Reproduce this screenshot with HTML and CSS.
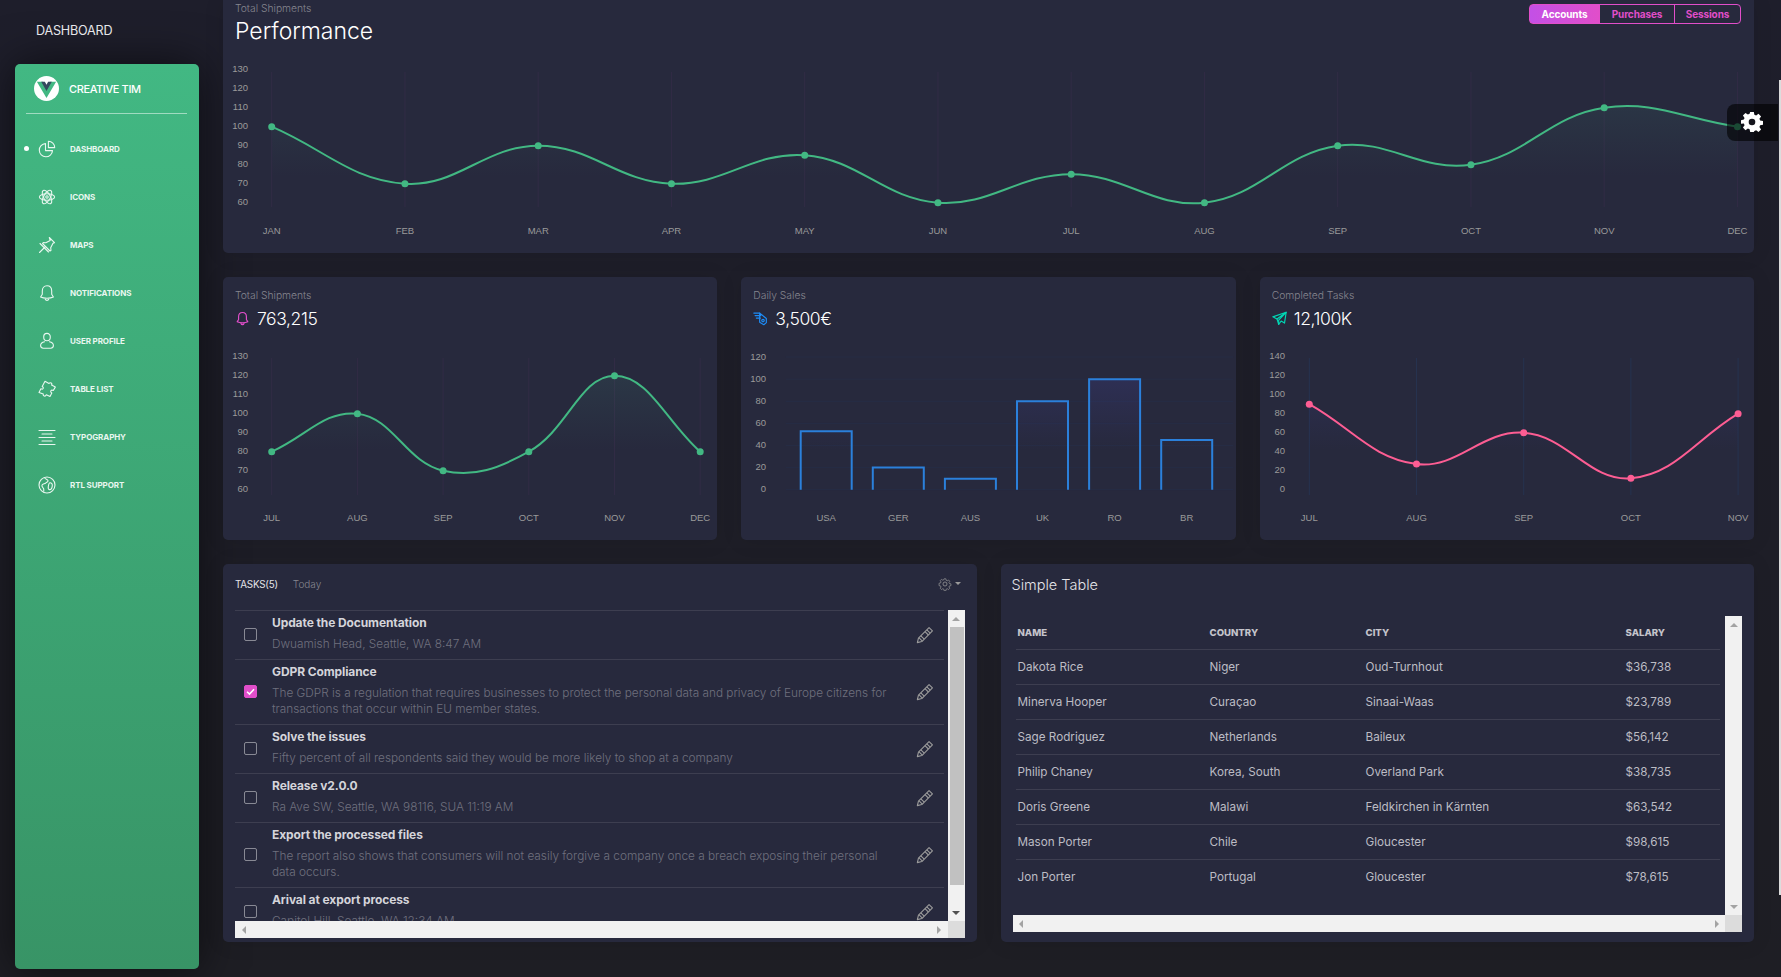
FILE: index.html
```html
<!DOCTYPE html>
<html lang="en">
<head>
    <meta charset="UTF-8">
    <meta name="viewport" content="width=device-width, initial-scale=1.0">
    <title>Vue Black Dashboard</title>
    <link rel="stylesheet" href="styles.css">
</head>
<body>
    <!-- Shared icons -->
    <svg class="sprite" aria-hidden="true">
        <symbol id="i-pencil" viewBox="0 0 16 16">
            <path d="M11.6 1.400l3 3-9.400 9.400-4 1 1-4z"/>
            <path d="M9.600 3.400l3 3M2.600 10.400l3 3M4.300 8.700l3 3M8 5l3 3"/>
        </symbol>
        <symbol id="i-bell" viewBox="0 0 18 18">
            <path d="M9 1.800c-3 0-4.700 2.300-4.700 5.200v3.200L2.600 13c1.800.9 3.900 1.200 6.400 1.200s4.600-.3 6.400-1.200l-1.700-2.800V7c0-2.900-1.700-5.200-4.700-5.200z"/>
            <path d="M7.200 15c.3 1 1 1.400 1.800 1.400s1.500-.4 1.800-1.400"/>
        </symbol>
    </svg>

    <div class="app">
        <aside class="side-col">
            <div class="nav-title">DASHBOARD</div>
            <div class="sidebar">
                <div class="brand">
                    <span class="brand-logo">
                        <svg viewBox="0 0 26 26">
                            <path class="v-outer" d="M3 6h6.500L13 12l3.500-6H23L13 23z"/>
                            <path class="v-inner" d="M7.500 6h3.800L13 9l1.700-3h3.800L13 15.500z"/>
                        </svg>
                    </span>
                    <span class="brand-name">CREATIVE TIM</span>
                </div>
                <ul class="menu">
                    <li class="menu-item active">
                        <svg class="menu-icon" viewBox="0 0 18 18"><path d="M7.500 3.600a6.600 6.600 0 1 0 7 7H7.500z"/><path d="M10.400 1.300a6.300 6.300 0 0 1 6.300 6.300h-6.300z"/></svg>
                        <span>DASHBOARD</span>
                    </li>
                    <li class="menu-item">
                        <svg class="menu-icon" viewBox="0 0 18 18"><ellipse cx="9" cy="9" rx="7.600" ry="3.300"/><ellipse cx="9" cy="9" rx="7.600" ry="3.300" transform="rotate(60 9 9)"/><ellipse cx="9" cy="9" rx="7.600" ry="3.300" transform="rotate(120 9 9)"/><circle cx="9" cy="9" r="1.200"/></svg>
                        <span>ICONS</span>
                    </li>
                    <li class="menu-item">
                        <svg class="menu-icon" viewBox="0 0 18 18"><path d="M11.300 1.500l5.200 5.200-1.500.6-2.300 4.400.3 2.500-1 .8L4.500 7.500l.8-1 2.500.3 4.400-2.300z"/><path d="M7.500 10.500l-6 6"/><path d="M2 7.500l8.500 8.500"/></svg>
                        <span>MAPS</span>
                    </li>
                    <li class="menu-item">
                        <svg class="menu-icon"><use href="#i-bell"/></svg>
                        <span>NOTIFICATIONS</span>
                    </li>
                    <li class="menu-item">
                        <svg class="menu-icon" viewBox="0 0 18 18"><path d="M9 1.400c-2 0-3.300 1.500-3.300 3.600S7 8.800 9 8.800s3.300-1.700 3.300-3.800S11 1.400 9 1.400z"/><path d="M6.600 9.800c-2.500.5-4 1.800-4 3.800 0 1.700 1 2.600 2.700 2.600h7.400c1.700 0 2.700-.9 2.700-2.600 0-2-1.500-3.300-4-3.800"/></svg>
                        <span>USER PROFILE</span>
                    </li>
                    <li class="menu-item">
                        <svg class="menu-icon" viewBox="0 0 18 18"><path d="M7 1.300l4 2.200c.6-.8 1.500-.9 2.200-.5.700.5.800 1.300.4 2.100l3.700 2-2 3.400c-1-.5-2-.4-2.400.3-.4.700 0 1.600.9 2.200l-1.800 3.500-3.700-1.700c-.4 1-1.200 1.500-2.100 1.200-.8-.3-1.200-1.100-.9-2L1 12.500l1.900-3.700c.9.500 1.800.4 2.200-.3.400-.8 0-1.600-.9-2.100z"/></svg>
                        <span>TABLE LIST</span>
                    </li>
                    <li class="menu-item">
                        <svg class="menu-icon" viewBox="0 0 18 18"><path d="M1 2.500h16M4 6h10M1 9.500h16M4 13h10M1 16.500h16"/></svg>
                        <span>TYPOGRAPHY</span>
                    </li>
                    <li class="menu-item">
                        <svg class="menu-icon" viewBox="0 0 18 18"><circle cx="9" cy="9" r="8"/><path d="M6.500 1.800c1 1.500 2.800 1.500 3.500 2.800.5 1.200-1.500 1.800-2.500 2.600-1 .8-3 .5-3.500 2-.4 1.400 1 2.400 1.600 3.500.4.900 0 1.800.2 2.600"/><path d="M12 6.800c1.500 0 2.600 1 2.300 3-.3 2.200-1.500 4-3 3.800-1.300-.2-1.200-1.600-1-3 .3-2 .5-3.800 1.700-3.800z"/></svg>
                        <span>RTL SUPPORT</span>
                    </li>
                </ul>
            </div>
        </aside>

        <main class="content">
            <!-- Performance -->
            <section class="card card-wide">
                <div class="wide-head">
                    <div>
                        <div class="category">Total Shipments</div>
                        <h2 class="wide-title">Performance</h2>
                    </div>
                    <div class="tabs">
                        <button class="tab tab-on">Accounts</button>
                        <button class="tab">Purchases</button>
                        <button class="tab">Sessions</button>
                    </div>
                </div>
                <svg id="chart-performance" class="chart chart-wide"></svg>
            </section>

            <!-- Small charts -->
            <div class="row-three">
                <section class="card card-small">
                    <div class="small-head">
                        <div class="category">Total Shipments</div>
                        <div class="stat">
                            <svg class="stat-icon stat-pink"><use href="#i-bell"/></svg>
                            <span>763,215</span>
                        </div>
                    </div>
                    <svg id="chart-shipments" class="chart chart-small"></svg>
                </section>
                <section class="card card-small">
                    <div class="small-head">
                        <div class="category">Daily Sales</div>
                        <div class="stat">
                            <svg class="stat-icon stat-blue" viewBox="0 0 18 18"><path d="M1 2.500h7M2.500 5.500h7M4 8.500h5"/><path d="M8 2.500l8 6.500v5l-3 2.500-5-3V2.500z"/><circle cx="12" cy="11.500" r="1.500"/></svg>
                            <span>3,500€</span>
                        </div>
                    </div>
                    <svg id="chart-sales" class="chart chart-small"></svg>
                </section>
                <section class="card card-small">
                    <div class="small-head">
                        <div class="category">Completed Tasks</div>
                        <div class="stat">
                            <svg class="stat-icon stat-teal" viewBox="0 0 18 18"><path d="M17 1.500L1 7l5 2.500L8 16l3-4 4 2.500z"/><path d="M17 1.500L6 9.500M17 1.500L8 11v5"/></svg>
                            <span>12,100K</span>
                        </div>
                    </div>
                    <svg id="chart-tasks" class="chart chart-small"></svg>
                </section>
            </div>

            <div class="row-two">
                <!-- Tasks -->
                <section class="card card-tall">
                    <div class="tasks-head">
                        <span class="tasks-title">TASKS(5)</span>
                        <span class="tasks-today">Today</span>
                        <span class="tasks-menu">
                            <svg class="tasks-gear" viewBox="0 0 18 18"><circle cx="9" cy="9" r="2.600"/><path d="M7.700 1.500h2.600l.4 2.200 1.500.7 1.900-1.200 1.800 1.800-1.200 1.900.7 1.500 2.200.4v2.600l-2.200.4-.7 1.500 1.200 1.900-1.800 1.800-1.900-1.200-1.500.7-.4 2.200H7.700l-.4-2.200-1.500-.7-1.900 1.200-1.800-1.800 1.200-1.900-.7-1.500-2.200-.4V7.900l2.200-.4.700-1.500-1.200-1.900 1.800-1.800 1.900 1.200 1.500-.7z" transform="translate(1 1) scale(.89)"/></svg>
                            <i class="caret"></i>
                        </span>
                    </div>
                    <div class="scroll-box tasks-box">
                        <div class="scroll-body">
                            <div class="task">
                                <span class="check"></span>
                                <div class="task-text">
                                    <div class="task-title">Update the Documentation</div>
                                    <div class="task-desc">Dwuamish Head, Seattle, WA 8:47 AM</div>
                                </div>
                                <svg class="pencil"><use href="#i-pencil"/></svg>
                            </div>
                            <div class="task">
                                <span class="check check-on">
                                    <svg viewBox="0 0 13 13"><path d="M3 6.800l2.500 2.300L10 4.200"/></svg>
                                </span>
                                <div class="task-text">
                                    <div class="task-title">GDPR Compliance</div>
                                    <div class="task-desc">The GDPR is a regulation that requires businesses to protect the personal data and privacy of Europe citizens for<br>transactions that occur within EU member states.</div>
                                </div>
                                <svg class="pencil"><use href="#i-pencil"/></svg>
                            </div>
                            <div class="task">
                                <span class="check"></span>
                                <div class="task-text">
                                    <div class="task-title">Solve the issues</div>
                                    <div class="task-desc">Fifty percent of all respondents said they would be more likely to shop at a company</div>
                                </div>
                                <svg class="pencil"><use href="#i-pencil"/></svg>
                            </div>
                            <div class="task">
                                <span class="check"></span>
                                <div class="task-text">
                                    <div class="task-title">Release v2.0.0</div>
                                    <div class="task-desc">Ra Ave SW, Seattle, WA 98116, SUA 11:19 AM</div>
                                </div>
                                <svg class="pencil"><use href="#i-pencil"/></svg>
                            </div>
                            <div class="task">
                                <span class="check"></span>
                                <div class="task-text">
                                    <div class="task-title">Export the processed files</div>
                                    <div class="task-desc">The report also shows that consumers will not easily forgive a company once a breach exposing their personal<br>data occurs.</div>
                                </div>
                                <svg class="pencil"><use href="#i-pencil"/></svg>
                            </div>
                            <div class="task">
                                <span class="check"></span>
                                <div class="task-text">
                                    <div class="task-title">Arival at export process</div>
                                    <div class="task-desc">Capitol Hill, Seattle, WA 12:34 AM</div>
                                </div>
                                <svg class="pencil"><use href="#i-pencil"/></svg>
                            </div>
                        </div>
                        <div class="bar-v">
                            <i class="arrow arrow-up"></i>
                            <div class="thumb"></div>
                            <i class="arrow arrow-down arrow-dark"></i>
                        </div>
                        <div class="bar-h">
                            <i class="arrow arrow-left"></i>
                            <i class="arrow arrow-right"></i>
                            <div class="corner"></div>
                        </div>
                    </div>
                </section>

                <!-- Simple table -->
                <section class="card card-tall">
                    <h4 class="table-title">Simple Table</h4>
                    <div class="scroll-box table-box">
                        <div class="scroll-body">
                            <table class="people">
                                <thead>
                                    <tr><th>Name</th><th>Country</th><th>City</th><th>Salary</th></tr>
                                </thead>
                                <tbody>
                                    <tr><td>Dakota Rice</td><td>Niger</td><td>Oud-Turnhout</td><td>$36,738</td></tr>
                                    <tr><td>Minerva Hooper</td><td>Curaçao</td><td>Sinaai-Waas</td><td>$23,789</td></tr>
                                    <tr><td>Sage Rodriguez</td><td>Netherlands</td><td>Baileux</td><td>$56,142</td></tr>
                                    <tr><td>Philip Chaney</td><td>Korea, South</td><td>Overland Park</td><td>$38,735</td></tr>
                                    <tr><td>Doris Greene</td><td>Malawi</td><td>Feldkirchen in Kärnten</td><td>$63,542</td></tr>
                                    <tr><td>Mason Porter</td><td>Chile</td><td>Gloucester</td><td>$98,615</td></tr>
                                    <tr><td>Jon Porter</td><td>Portugal</td><td>Gloucester</td><td>$78,615</td></tr>
                                </tbody>
                            </table>
                        </div>
                        <div class="bar-v">
                            <i class="arrow arrow-up"></i>
                            <i class="arrow arrow-down"></i>
                        </div>
                        <div class="bar-h">
                            <i class="arrow arrow-left"></i>
                            <i class="arrow arrow-right"></i>
                            <div class="corner"></div>
                        </div>
                    </div>
                </section>
            </div>
        </main>
    </div>

    <!-- Settings tab -->
    <div class="fixed-plugin">
        <svg viewBox="0 0 24 24">
            <path d="M10 1h4l.6 3.100 1.900.8 2.600-1.800 2.800 2.800-1.800 2.600.8 1.900 3.100.6v4l-3.100.6-.8 1.900 1.800 2.600-2.800 2.800-2.600-1.800-1.900.8L14 23h-4l-.6-3.100-1.900-.8-2.600 1.800-2.800-2.800 1.800-2.600-.8-1.900L0 14v-4l3.100-.6.800-1.900-1.800-2.600 2.800-2.800 2.600 1.800 1.900-.8z"/>
            <circle cx="12" cy="12" r="3.600" class="gear-hole"/>
        </svg>
    </div>
    <div class="page-thumb"></div>

    <script src="charts.js"></script>
</body>
</html>
```

FILE: styles.css
```css
* {
    box-sizing: border-box;
}

html, body {
    height: 100%;
}

body {
    font-family: Inter, "Liberation Sans", sans-serif;
    margin: 0;
    overflow: hidden;
    position: relative;
    background: linear-gradient(#1e1e2b, #1e1e24);
    color: white;
}

.sprite {
    display: none;
}

.app {
    display: flex;
    height: 977px;
}

/* Sidebar */
.side-col {
    width: 223px;
    flex: none;
}

.nav-title {
    height: 64px;
    padding: 23px 0 0 36px;
    font-size: 12.6px;
    line-height: 16px;
    letter-spacing: -0.2px;
    color: #e6e6ea;
}

.sidebar {
    width: 184px;
    height: 905px;
    margin-left: 15px;
    border-radius: 5px;
    background: linear-gradient(#42b883, #389466);
    box-shadow: 0 0 45px rgba(0, 0, 0, 0.6);
}

.brand {
    display: flex;
    align-items: center;
    height: 50px;
    margin: 0 12px 0 11px;
    padding-left: 8px;
    border-bottom: 1px solid rgba(255, 255, 255, 0.5);
}

.brand-logo {
    width: 25px;
    height: 25px;
    margin-right: 10px;
    border-radius: 50%;
    background: white;
    display: flex;
}

.brand-logo svg {
    width: 25px;
    height: 25px;
}

.v-outer {
    fill: #42b883;
}

.v-inner {
    fill: #35495e;
}

.brand-name {
    font-size: 11px;
    font-weight: 500;
    letter-spacing: -0.4px;
}

.menu {
    list-style: none;
    margin: 11px 0 0;
    padding: 0;
}

.menu-item {
    position: relative;
    display: flex;
    align-items: center;
    height: 48px;
    padding-left: 23px;
    font-size: 8px;
    font-weight: 700;
    letter-spacing: -0.1px;
    color: #e9f7f0;
}

.menu-item.active::before {
    content: "";
    position: absolute;
    left: 9px;
    top: 21px;
    width: 5px;
    height: 5px;
    border-radius: 50%;
    background: white;
}

.menu-icon {
    width: 18px;
    height: 18px;
    margin-right: 14px;
    flex: none;
    fill: none;
    stroke: #e9f7f0;
    stroke-width: 1.1;
    stroke-linejoin: round;
    stroke-linecap: round;
}

/* Content */
.content {
    width: 1531px;
    flex: none;
}

.card {
    background: #27293d;
    border-radius: 5px;
    box-shadow: 0 1px 20px rgba(0, 0, 0, 0.1);
}

.card-wide {
    height: 253px;
    border-radius: 0 0 5px 5px;
}

.wide-head {
    display: flex;
    justify-content: space-between;
    height: 56px;
    padding: 1px 13px 0 12px;
}

.category {
    font-size: 10.3px;
    font-weight: 300;
    line-height: 14px;
    color: #86868f;
}

.wide-title {
    margin: 0;
    font-size: 23px;
    font-weight: 300;
    line-height: 32px;
    color: white;
}

.tabs {
    display: flex;
    margin-top: 3px;
    height: 20px;
}

.tab {
    height: 20px;
    padding: 0;
    width: 67px;
    border: 1px solid #e14eca;
    margin-left: -1px;
    background: transparent;
    color: #e14eca;
    font-family: inherit;
    font-size: 10px;
    font-weight: 700;
    letter-spacing: -0.1px;
}

.tab:nth-child(1) {
    width: 71px;
    border-radius: 4px 0 0 4px;
}

.tab:nth-child(2) {
    width: 76px;
}

.tab:last-child {
    border-radius: 0 4px 4px 0;
}

.tab-on {
    color: white;
    background: linear-gradient(to right, #c350e6, #e14eca);
}

.chart {
    display: block;
    width: 100%;
}

.chart-wide {
    height: 197px;
}

.chart-small {
    height: 200px;
}

.chart text {
    font-family: "Liberation Sans", sans-serif;
    font-size: 9.5px;
    fill: #9a9a9a;
}

.row-three {
    display: grid;
    grid-template-columns: repeat(3, 1fr);
    gap: 24px;
    margin-top: 24px;
}

.card-small {
    height: 263px;
}

.small-head {
    height: 63px;
    padding: 11px 12px 0;
}

.small-head .category {
    margin-bottom: 1px;
}

.stat {
    display: flex;
    align-items: center;
    gap: 7px;
    height: 30px;
    font-size: 17.5px;
    font-weight: 300;
    letter-spacing: -0.4px;
}

.stat-icon {
    width: 15px;
    height: 15px;
    flex: none;
    fill: none;
    stroke-width: 1.4;
    stroke-linejoin: round;
    stroke-linecap: round;
}

.stat-pink {
    stroke: #e14eca;
}

.stat-blue {
    stroke: #1d8cf8;
}

.stat-teal {
    stroke: #00d6b4;
}

.row-two {
    display: grid;
    grid-template-columns: 1fr 1fr;
    gap: 24px;
    margin-top: 24px;
}

.card-tall {
    height: 378px;
}

/* Tasks */
.tasks-head {
    display: flex;
    align-items: center;
    height: 39px;
    padding: 0 12px;
    margin-bottom: 7px;
}

.tasks-title {
    font-size: 9.8px;
    padding-top: 1px;
    letter-spacing: -0.2px;
    color: #e4e4e8;
}

.tasks-today {
    margin-left: 15px;
    font-size: 10px;
    font-weight: 300;
    color: #86868f;
}

.tasks-menu {
    margin-left: auto;
    display: flex;
    align-items: center;
    gap: 3px;
    margin-right: 4px;
}

.tasks-gear {
    width: 14px;
    height: 14px;
    fill: none;
    stroke: #9a9a9a;
    stroke-width: 1;
}

.caret {
    width: 0;
    height: 0;
    border-left: 3px solid transparent;
    border-right: 3px solid transparent;
    border-top: 3px solid #9a9a9a;
}

.scroll-box {
    position: relative;
    margin: 0 12px;
}

.tasks-box {
    height: 328px;
}

.table-box {
    height: 316px;
}

.scroll-body {
    height: calc(100% - 17px);
    margin-right: 17px;
    overflow: hidden;
}

/* Scrollbars drawn over the two panels */
.bar-v {
    position: absolute;
    top: 0;
    right: 0;
    bottom: 17px;
    width: 17px;
    display: flex;
    flex-direction: column;
    align-items: center;
    justify-content: space-between;
    background: #f1f1f1;
}

.tasks-box .bar-v {
    justify-content: flex-start;
}

.tasks-box .arrow-down {
    margin-top: auto;
}

.thumb {
    width: 14px;
    height: 258px;
    margin-left: 1px;
    background: #c1c1c1;
}

.bar-h {
    position: absolute;
    left: 0;
    right: 0;
    bottom: 0;
    height: 17px;
    display: flex;
    background: #f1f1f1;
}

.bar-h .arrow-right {
    margin-left: auto;
}

.corner {
    width: 17px;
    background: #dcdcdc;
}

.arrow {
    width: 17px;
    height: 17px;
    flex: none;
    display: flex;
    align-items: center;
    justify-content: center;
}

.arrow::after {
    content: "";
    width: 0;
    height: 0;
    border-style: solid;
    border-color: transparent;
}

.arrow-up::after {
    border-width: 0 4px 4px;
    border-bottom-color: #a3a3a3;
}

.arrow-down::after {
    border-width: 4px 4px 0;
    border-top-color: #a3a3a3;
}

.arrow-dark::after {
    border-top-color: #505050;
}

.arrow-left::after {
    border-width: 4px 4px 4px 0;
    border-right-color: #a3a3a3;
}

.arrow-right::after {
    border-width: 4px 0 4px 4px;
    border-left-color: #a3a3a3;
}

.task {
    display: flex;
    align-items: center;
    height: 49px;
    margin-right: 4px;
    padding: 0 10px 0 9px;
    border-top: 1px solid rgba(255, 255, 255, 0.1);
}

.task:nth-child(2),
.task:nth-child(5) {
    height: 65px;
}

.check {
    width: 13px;
    height: 13px;
    margin: 0 15px 2px 0;
    flex: none;
    border: 1px solid rgba(255, 255, 255, 0.45);
    border-radius: 2px;
}

.check svg {
    display: block;
    width: 13px;
    height: 13px;
    margin: -1px;
    fill: none;
    stroke: white;
    stroke-width: 1.5;
}

.check-on {
    background: #e14eca;
    border-color: #e14eca;
}

.task-text {
    flex: 1;
    min-width: 0;
    align-self: flex-start;
    padding-top: 3px;
}

.task-title {
    font-size: 12px;
    font-weight: 700;
    line-height: 18px;
    letter-spacing: -0.1px;
    color: #d4d4da;
}

.task-desc {
    font-size: 11.8px;
    font-weight: 300;
    line-height: 16px;
    margin-top: 4px;
    white-space: nowrap;
    color: #6f707d;
}

.pencil {
    width: 18px;
    height: 18px;
    flex: none;
    fill: none;
    stroke: #9a9a9a;
    stroke-width: 1;
    stroke-linejoin: round;
}

/* Simple table */
.table-title {
    margin: 0;
    height: 52px;
    padding: 11px 0 0 11px;
    font-size: 14.5px;
    font-weight: 300;
    line-height: 20px;
    color: #e4e4e8;
}

.table-box .scroll-body {
    padding-left: 3px;
}

.people {
    width: 704px;
    table-layout: fixed;
    border-collapse: collapse;
}

.people th {
    height: 33px;
    padding: 0 0 0 2px;
    text-align: left;
    font-size: 9.6px;
    font-weight: 800;
    text-transform: uppercase;
    color: #c4c4cb;
}

.people th:nth-child(1) {
    width: 192px;
}

.people th:nth-child(2) {
    width: 156px;
}

.people th:nth-child(3) {
    width: 260px;
}

.people td {
    height: 35px;
    padding: 0 0 0 2px;
    font-size: 11.7px;
    color: #bcbcc4;
    border-top: 1px solid rgba(255, 255, 255, 0.1);
}

/* Settings tab over the page */
.fixed-plugin {
    position: absolute;
    top: 104px;
    right: 3px;
    width: 51px;
    height: 37px;
    padding: 7px 0 0 14px;
    border-radius: 8px 0 0 8px;
    background: rgba(0, 0, 0, 0.6);
}

.fixed-plugin svg {
    display: block;
    width: 22px;
    height: 22px;
    fill: white;
}

.gear-hole {
    fill: #15151c;
}

.page-thumb {
    position: absolute;
    top: 80px;
    right: 0;
    width: 2px;
    height: 815px;
    background: #dcdcdc;
}
```

FILE: charts.js
```js
// Draws the dashboard charts as inline SVG
var NS = 'http://www.w3.org/2000/svg';

function el(parent, name, attrs, text) {
    var node = document.createElementNS(NS, name);
    for (var k in attrs) node.setAttribute(k, attrs[k]);
    if (text !== undefined) node.textContent = text;
    parent.appendChild(node);
    return node;
}

// same curve as a line chart with tension 0.4
function curve(pts) {
    var d = 'M' + pts[0][0] + ' ' + pts[0][1];
    var ctrl = pts.map(function (p, i) {
        var a = pts[Math.max(i - 1, 0)], b = pts[Math.min(i + 1, pts.length - 1)];
        var d1 = Math.hypot(p[0] - a[0], p[1] - a[1]), d2 = Math.hypot(b[0] - p[0], b[1] - p[1]);
        var sum = d1 + d2 || 1;
        return {
            prev: [p[0] - 0.4 * d1 / sum * (b[0] - a[0]), p[1] - 0.4 * d1 / sum * (b[1] - a[1])],
            next: [p[0] + 0.4 * d2 / sum * (b[0] - a[0]), p[1] + 0.4 * d2 / sum * (b[1] - a[1])]
        };
    });
    for (var i = 1; i < pts.length; i++) {
        d += 'C' + ctrl[i - 1].next.join(' ') + ' ' + ctrl[i].prev.join(' ') + ' ' + pts[i].join(' ');
    }
    return d;
}

function gradient(svg, id, color, from, to, alpha) {
    var defs = el(svg, 'defs', {});
    var g = el(defs, 'linearGradient', { id: id, gradientUnits: 'userSpaceOnUse', x1: 0, x2: 0, y1: from, y2: to });
    el(g, 'stop', { offset: 0, 'stop-color': color, 'stop-opacity': 0 });
    el(g, 'stop', { offset: 1, 'stop-color': color, 'stop-opacity': alpha });
}

function axisY(svg, c, y) {
    c.ticks.forEach(function (t) {
        el(svg, 'text', { x: c.axisX, y: y(t) - 1, 'text-anchor': 'end', 'dominant-baseline': 'central' }, t);
    });
}

function lineChart(id, c) {
    var svg = document.getElementById(id);
    var y = function (v) { return c.y0 - v * c.scale; };
    var pts = c.data.map(function (v, i) { return [c.x0 + i * c.dx, y(v)]; });
    var bottom = y(c.ticks[c.ticks.length - 1]);

    gradient(svg, id + '-fill', c.fill, c.fadeFrom, c.fadeTo, c.alpha);
    axisY(svg, c, y);
    pts.forEach(function (p, i) {
        el(svg, 'line', { x1: p[0], x2: p[0], y1: c.gridTop, y2: c.gridBottom, stroke: c.grid });
        el(svg, 'text', { x: p[0], y: c.labelY, 'text-anchor': 'middle', 'dominant-baseline': 'central' }, c.labels[i]);
    });

    var line = curve(pts);
    el(svg, 'path', { d: line + 'L' + pts[pts.length - 1][0] + ' ' + bottom + 'L' + pts[0][0] + ' ' + bottom + 'Z', fill: 'url(#' + id + '-fill)' });
    el(svg, 'path', { d: line, fill: 'none', stroke: c.color, 'stroke-width': 2 });
    pts.forEach(function (p) {
        el(svg, 'circle', { cx: p[0], cy: p[1], r: 3.5, fill: c.color });
    });
}

function barChart(id, c) {
    var svg = document.getElementById(id);
    var y = function (v) { return c.y0 - v * c.scale; };

    gradient(svg, id + '-fill', '#4848b0', 110, 2, 0.3);
    axisY(svg, c, y);
    c.ticks.forEach(function (t) {
        el(svg, 'line', { x1: c.x0 - 15, x2: c.x0 + 6 * c.dx, y1: y(t), y2: y(t), stroke: 'rgba(29,140,248,0.04)' });
    });
    c.data.forEach(function (v, i) {
        var left = c.x0 + i * c.dx, right = left + c.width, top = y(v), base = y(0);
        el(svg, 'path', { d: 'M' + left + ' ' + base + 'H' + right + 'V' + top + 'H' + left + 'Z', fill: 'url(#' + id + '-fill)' });
        el(svg, 'path', { d: 'M' + left + ' ' + base + 'V' + top + 'H' + right + 'V' + base, fill: 'none', stroke: '#2b80db', 'stroke-width': 2 });
        el(svg, 'text', { x: left + c.width / 2, y: c.labelY, 'text-anchor': 'middle', 'dominant-baseline': 'central' }, c.labels[i]);
    });
}

lineChart('chart-performance', {
    data: [100, 70, 90, 70, 85, 60, 75, 60, 90, 80, 110, 100],
    labels: ['JAN', 'FEB', 'MAR', 'APR', 'MAY', 'JUN', 'JUL', 'AUG', 'SEP', 'OCT', 'NOV', 'DEC'],
    ticks: [130, 120, 110, 100, 90, 80, 70, 60],
    x0: 48.7, dx: 133.25, y0: 260.7, scale: 1.9, axisX: 25, labelY: 174.3,
    gridTop: 16, gridBottom: 151, grid: 'rgba(225,78,202,0.06)',
    color: '#42b883', fill: '#428679', fadeFrom: 120, fadeTo: 12, alpha: 0.2
});

lineChart('chart-shipments', {
    data: [80, 100, 70, 80, 120, 80],
    labels: ['JUL', 'AUG', 'SEP', 'OCT', 'NOV', 'DEC'],
    ticks: [130, 120, 110, 100, 90, 80, 70, 60],
    x0: 48.7, dx: 85.7, y0: 263.7, scale: 1.9, axisX: 25, labelY: 177.3,
    gridTop: 18, gridBottom: 155, grid: 'rgba(225,78,202,0.06)',
    color: '#42b883', fill: '#428679', fadeFrom: 110, fadeTo: 2, alpha: 0.22
});

barChart('chart-sales', {
    data: [53, 20, 10, 80, 100, 45],
    labels: ['USA', 'GER', 'AUS', 'UK', 'RO', 'BR'],
    ticks: [120, 100, 80, 60, 40, 20, 0],
    x0: 59.7, dx: 72.1, width: 51, y0: 149.7, scale: 1.105, axisX: 25, labelY: 177.3
});

lineChart('chart-tasks', {
    data: [90, 27, 60, 12, 80],
    labels: ['JUL', 'AUG', 'SEP', 'OCT', 'NOV'],
    ticks: [140, 120, 100, 80, 60, 40, 20, 0],
    x0: 49.3, dx: 107.2, y0: 149.7, scale: 0.95, axisX: 25, labelY: 177.3,
    gridTop: 18, gridBottom: 155, grid: 'rgba(29,140,248,0.1)',
    color: '#fd5d93', fill: '#4848b0', fadeFrom: 110, fadeTo: 2, alpha: 0.25
});
```
